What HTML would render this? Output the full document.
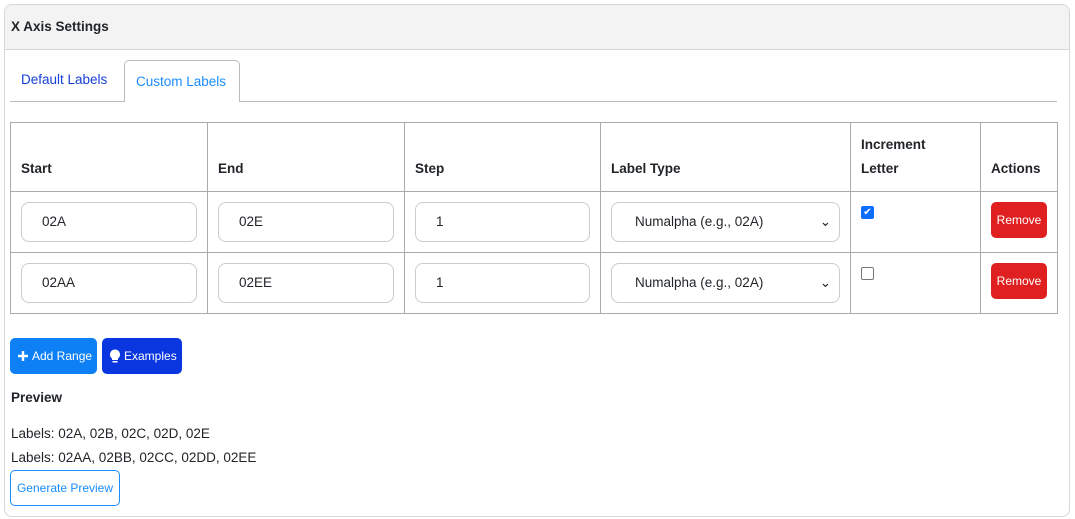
<!DOCTYPE html>
<html><head><style>
*{box-sizing:border-box;margin:0;padding:0}
body{width:1075px;height:519px;background:#fff;font-family:"Liberation Sans",sans-serif;font-size:13.5px;color:#212529;position:relative;overflow:hidden}
.card{position:absolute;left:4px;top:4px;width:1066px;height:513px;border:1px solid #d6d6d6;border-radius:8px;overflow:hidden}
.hdr{height:45px;background:#f3f3f3;border-bottom:1px solid #d6d6d6;font-weight:bold;padding:14px 6px;font-size:13.5px}
.a{position:absolute;white-space:nowrap}
.tabline{position:absolute;left:10px;top:101px;width:1047px;height:1px;background:#bbb}
.tab{position:absolute;left:124px;top:60px;width:116px;height:42px;border:1px solid #bbb;border-bottom:none;border-radius:5px 5px 0 0;background:#fff;color:#1a8cff;padding:13px 11px;white-space:nowrap}
table{position:absolute;left:10px;top:122px;border-collapse:collapse;width:1048px}
td,th{border:1px solid #aaa;text-align:left;vertical-align:top;padding:0 10px}
th{height:69px;vertical-align:bottom;padding-bottom:10px;font-weight:bold;line-height:24px}
td{height:61px;padding-top:10px}
.in{height:40px;border:1px solid #ccc;border-radius:8px;padding:11px 20px;font-size:13.5px}
.sel{display:flex;justify-content:space-between;padding-right:8px}
.rm{background:#e02020;color:#fff;border-radius:5px;width:56px;height:36px;font-size:12px;text-align:center;line-height:36px}
.cb{width:13px;height:13px;border:1px solid #777;border-radius:2px;margin-top:4px}
.btn{position:absolute;top:338px;height:36px;border-radius:5px;color:#fff;font-size:12px;line-height:36px;padding-left:7px;white-space:nowrap;display:flex;align-items:center;gap:3px}
</style></head><body>
<div class="card"><div class="hdr">X Axis Settings</div></div>
<div class="a" style="left:21px;top:72px;color:#1640d8">Default Labels</div>
<div class="tabline"></div>
<div class="tab">Custom Labels</div>
<table>
<tr><th style="width:197px">Start</th><th style="width:197px">End</th><th style="width:196px">Step</th><th style="width:250px">Label Type</th><th style="width:130px">Increment<br>Letter</th><th>Actions</th></tr>
<tr><td><div class="in">02A</div></td><td><div class="in">02E</div></td><td><div class="in">1</div></td><td><div class="in sel" style="padding-left:23px"><span>Numalpha (e.g., 02A)</span><span>⌄</span></div></td><td><div class="cb" style="background:#0d6efd;border-color:#0d6efd;color:#fff;font-size:10px;line-height:11px;text-align:center">✔</div></td><td><div class="rm">Remove</div></td></tr>
<tr><td><div class="in">02AA</div></td><td><div class="in">02EE</div></td><td><div class="in">1</div></td><td><div class="in sel" style="padding-left:23px"><span>Numalpha (e.g., 02A)</span><span>⌄</span></div></td><td><div class="cb"></div></td><td><div class="rm">Remove</div></td></tr>
</table>
<div class="btn" style="left:10px;width:87px;background:#0d80f5"><svg width="12" height="12" viewBox="0 0 12 12"><path d="M6 1v10M1 6h10" stroke="#fff" stroke-width="2.4"/></svg>Add Range</div>
<div class="btn" style="left:102px;width:80px;background:#0a36e0"><svg width="12" height="14" viewBox="0 0 12 14"><path d="M6 0.5a5 5 0 0 0-3 9v1.5h6V9.5a5 5 0 0 0-3-9z M3.5 12h5v1.5h-5z" fill="#fff"/></svg>Examples</div>
<div class="a" style="left:11px;top:390px;font-weight:bold">Preview</div>
<div class="a" style="left:11px;top:426px">Labels: 02A, 02B, 02C, 02D, 02E</div>
<div class="a" style="left:11px;top:450px">Labels: 02AA, 02BB, 02CC, 02DD, 02EE</div>
<div class="a" style="left:10px;top:470px;width:110px;height:36px;border:1px solid #1a8cff;border-radius:5px;color:#1a8cff;font-size:12px;text-align:center;line-height:34px">Generate Preview</div>
</body></html>
